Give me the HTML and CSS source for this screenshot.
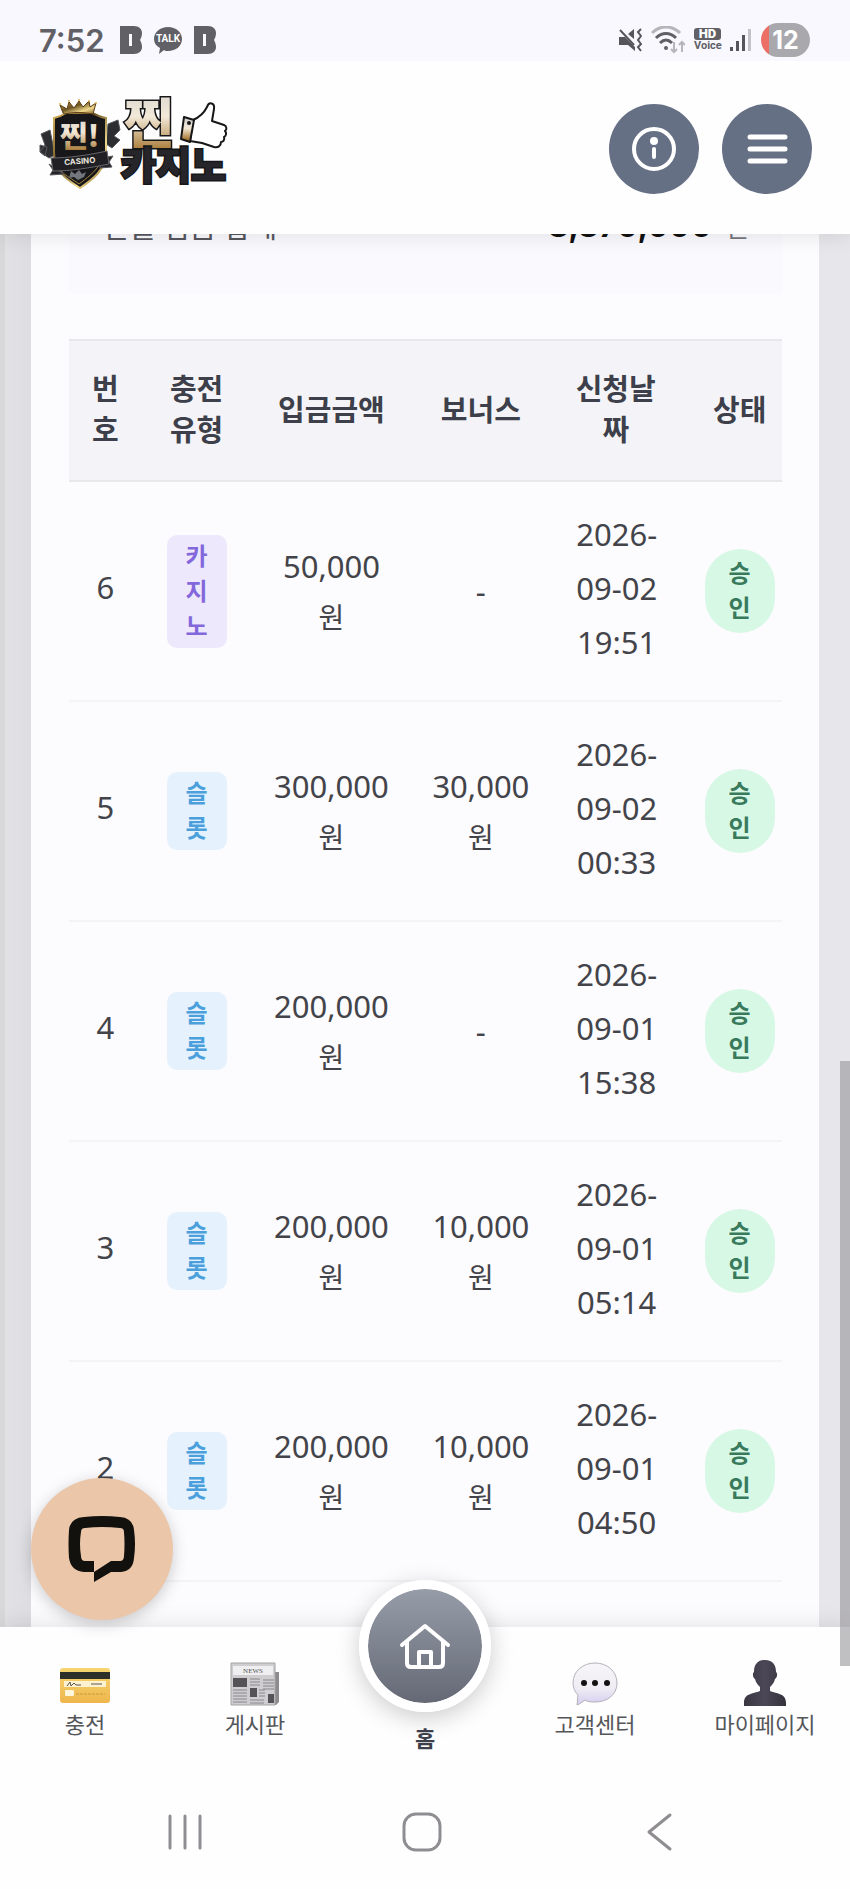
FILE: index.html
```html
<!DOCTYPE html>
<html lang="ko">
<head>
  <meta charset="UTF-8" />
  <meta name="viewport" content="width=device-width, initial-scale=1" />
  <title>찐카지노 - 충전내역</title>
  <link rel="stylesheet" href="styles.css">
</head>
<body>
  <div class="status-bar">
    <div class="status-left">
      <span class="clock">7:52</span>
      <svg class="b-icon" viewBox="0 0 22 28"><path fill="#606066" fill-rule="evenodd" d="M0 0h14c5 0 8 3 8 7 0 3-1 5-2 7 1 2 2 4 2 7 0 4-3 7-8 7H0zM9 8v12h3V8z"/></svg>
      <svg class="talk-icon" viewBox="0 0 30 28"><path fill="#606066" d="M15 1c8 0 14 5 14 12s-6 12-14 12c-2 0-3 0-4-1l-5 4 1-6C3 20 1 17 1 13 1 6 7 1 15 1z"/><text x="15" y="16" class="talk-text">TALK</text></svg>
      <svg class="b-icon" viewBox="0 0 22 28"><path fill="#606066" fill-rule="evenodd" d="M0 0h14c5 0 8 3 8 7 0 3-1 5-2 7 1 2 2 4 2 7 0 4-3 7-8 7H0zM9 8v12h3V8z"/></svg>
    </div>
    <div class="status-right">
      <svg width="24" height="24" viewBox="0 0 24 24" fill="none" stroke="#55555b" stroke-width="2"><path fill="#55555b" stroke="none" d="M1 9h6l10 10v4l-7-6H1zM10 6l6-5v10z"/><path d="M2 2l14 15M23 1l-3 3 3 4-3 4 3 4-3 3 3 4"/></svg>
      <svg width="34" height="28" viewBox="0 0 34 28" fill="none" stroke-width="3"><path stroke="#b5b5ba" d="M1 7c8-8 20-8 28 0"/><path stroke="#606066" d="M5 12c6-6 14-6 20 0M9 17c4-4 8-4 12 0"/><circle cx="15" cy="22" r="2" fill="#606066" stroke="none"/><path stroke="#b5b5ba" stroke-width="2" d="M23 16v10m-3-3l3 3 3-3M31 26V16m-3 3l3-3 3 3"/></svg>
      <span class="hd"><b>HD</b><span>Voice</span></span>
      <svg width="22" height="24" viewBox="0 0 22 24"><path fill="#55555b" d="M0 19h3v4H0zM6 13h3v10H6zM12 7h3v16h-3z"/><path fill="#c3c3c8" d="M18 1h3v22h-3z"/></svg>
      <span class="battery">12</span>
    </div>
  </div>

  <header class="header">
    <a href="#" class="logo" aria-label="찐카지노">
      <svg width="192" height="94" viewBox="0 0 192 94">
        <defs>
          <linearGradient id="gold" x1="0" y1="0" x2="0" y2="1"><stop offset="0" stop-color="#cfcdca"/><stop offset=".45" stop-color="#f3e9d8"/><stop offset=".9" stop-color="#a5762f"/></linearGradient>
          <linearGradient id="rim" x1="0" y1="0" x2="1" y2="1"><stop offset="0" stop-color="#d9b35c"/><stop offset=".4" stop-color="#6b5220"/><stop offset=".7" stop-color="#f0d98d"/><stop offset="1" stop-color="#7a5a1c"/></linearGradient>
        </defs>
        <g fill="#2b2d31" stroke="#55575c">
          <path d="M3 32l9-4 5 25-6 3-9-6 5-7zM2 43l7 2-2 9-5-4z"/>
          <path d="M70 22l10-4 2 10-6 6 6 4-8 8-6-4z"/>
        </g>
        <path fill="#17171a" stroke="url(#rim)" stroke-width="2" d="M16 16c5-1 9-3 12-5h26c4 2 8 4 14 5v34c0 18-14 28-26 36C29 78 16 69 16 50z"/>
        <path fill="none" stroke="#a0813e" d="M20 65c5 8 13 11 21 17 8-6 15-11 21-20"/>
        <path fill="url(#rim)" stroke="#5b3c13" d="M25 11L22 3l7 4 2-7 5 6 5-7 4 6 6-6 1 6 6-4-3 11c-10-2-20-2-28 0z"/>
        <g fill="#e2b552"><circle cx="22" cy="2" r="1"/><circle cx="31" cy="-1" r="1"/><circle cx="41" cy="-2" r="1"/><circle cx="51" cy="-1" r="1"/><circle cx="58" cy="1" r="1"/></g>
        <text x="22" y="45" class="badge-name">찐!</text>
        <path fill="#252529" stroke="#56565b" d="M11 62l4 6-3 5 14-1zM64 56l11-2-4 6 3 5-12 1z"/>
        <path fill="#202024" stroke="#66666b" d="M13 56c18 0 38-3 56-7l2 13c-20 4-38 7-56 7z"/>
        <text x="42" y="62" class="badge-casino" transform="rotate(-5 42 62)">CASINO</text>
        <path fill="#74767d" d="M33 69l4 3 4-4 3 4 4-2-2 5-6 3-4-3-5 1z"/>
        <text x="86" y="42" class="logo-top">찐</text>
        <g stroke="#17171a" stroke-width="2" stroke-linejoin="round">
          <path fill="#fff" d="M155 18c7-3 11-7 14-13 2-6 8-4 7 2l-2 12 12 4c3 1 3 5 1 6 2 2 1 5-1 6 1 3-1 5-3 5 0 4-3 6-7 5l-12-4-12-2z"/>
          <path fill="url(#gold)" d="M146 15l10 3-4 22-9-3z"/>
        </g>
        <circle cx="151" cy="21" r="2" fill="#17171a"/>
        <text x="83" y="77" class="logo-bottom">카지노</text>
      </svg>
    </a>
    <div class="header-buttons">
      <button type="button" class="round-btn" aria-label="안내">
        <svg width="44" height="44" viewBox="0 0 44 44" fill="none" stroke="#fff" stroke-width="4" stroke-linecap="round"><circle cx="22" cy="22" r="20"/><circle cx="22" cy="14" r="4" fill="#fff" stroke="none"/><path d="M22 22v8"/></svg>
      </button>
      <button type="button" class="round-btn" aria-label="메뉴">
        <svg width="44" height="44" viewBox="0 0 44 44" stroke="#fff" stroke-width="5" stroke-linecap="round"><path d="M5 10h35M5 22h35M5 34h35"/></svg>
      </button>
    </div>
  </header>

  <main class="content">
    <section class="card">
      <div class="summary">
        <span class="summary-label">전월 입금 합계</span>
        <span class="summary-value"><b>8,370,000</b>원</span>
      </div>
      <div class="table-wrap">
        <table class="history">
          <colgroup>
            <col class="col-no"><col class="col-type"><col class="col-amount"><col class="col-bonus"><col class="col-date"><col class="col-state">
          </colgroup>
          <thead>
            <tr><th>번호</th><th>충전유형</th><th>입금금액</th><th>보너스</th><th>신청날짜</th><th>상태</th></tr>
          </thead>
          <tbody>
            <tr>
              <td class="no">6</td>
              <td><span class="type casino">카지노</span></td>
              <td>50,000 <span class="won">원</span></td>
              <td>-</td>
              <td class="date">2026-09-02 19:51</td>
              <td><span class="state">승인</span></td>
            </tr>
            <tr>
              <td class="no">5</td>
              <td><span class="type slot">슬롯</span></td>
              <td>300,000 <span class="won">원</span></td>
              <td>30,000 <span class="won">원</span></td>
              <td class="date">2026-09-02 00:33</td>
              <td><span class="state">승인</span></td>
            </tr>
            <tr>
              <td class="no">4</td>
              <td><span class="type slot">슬롯</span></td>
              <td>200,000 <span class="won">원</span></td>
              <td>-</td>
              <td class="date">2026-09-01 15:38</td>
              <td><span class="state">승인</span></td>
            </tr>
            <tr>
              <td class="no">3</td>
              <td><span class="type slot">슬롯</span></td>
              <td>200,000 <span class="won">원</span></td>
              <td>10,000 <span class="won">원</span></td>
              <td class="date">2026-09-01 05:14</td>
              <td><span class="state">승인</span></td>
            </tr>
            <tr>
              <td class="no">2</td>
              <td><span class="type slot">슬롯</span></td>
              <td>200,000 <span class="won">원</span></td>
              <td>10,000 <span class="won">원</span></td>
              <td class="date">2026-09-01 04:50</td>
              <td><span class="state">승인</span></td>
            </tr>
          </tbody>
        </table>
      </div>
    </section>
  </main>

  <nav class="tab-bar">
    <a href="#" class="tab">
      <svg width="50" height="44" viewBox="0 0 50 44">
        <defs><linearGradient id="cardbg" x1="0" y1="0" x2="0" y2="1"><stop offset="0" stop-color="#f6d671"/><stop offset="1" stop-color="#efb64d"/></linearGradient></defs>
        <rect x="0" y="6" width="50" height="35" rx="3" fill="url(#cardbg)"/>
        <path fill="#2c3029" d="M0 10h50v7H0z"/>
        <path fill="#fdf2d0" d="M4 19h42v6H4z"/>
        <path fill="none" stroke="#555" d="M7 24l3-4 1 4 3-3 2 2h5M31 22h11"/>
        <rect x="5" y="28" width="9" height="6" rx="1" fill="#fff7dc"/>
        <path stroke="#c99a3c" stroke-dasharray="3 1" d="M16 32h29"/>
      </svg>
      <span>충전</span>
    </a>
    <a href="#" class="tab">
      <svg width="50" height="44" viewBox="0 0 50 44">
        <path fill="#8d8b8e" d="M42 10h7v30l-3 3h-6z"/>
        <path fill="#cfcdd0" stroke="#a5a3a6" d="M1 1h44v42H1z"/>
        <path fill="#efeef0" d="M3 4h40v9H3z"/>
        <text x="23" y="11" class="news-text">NEWS</text>
        <path fill="#555357" d="M3 16h14v9H3zM20 26h7v9h-7zM38 32h6v9h-6z"/>
        <path stroke="#88868a" d="M20 17h10M20 20h10M20 23h10M33 18h11M33 21h11M33 24h11M33 27h11M3 28h14M3 31h14M3 34h14M3 37h14M3 40h14M20 38h14M20 41h14M29 28h6M29 31h6M29 34h6"/>
      </svg>
      <span>게시판</span>
    </a>
    <a href="#" class="tab home">
      <span class="home-circle">
        <svg width="52" height="48" viewBox="0 0 52 48" fill="none" stroke="#fff" stroke-width="4" stroke-linecap="round" stroke-linejoin="round"><path d="M3 23L26 4l23 19M8 20v21q0 4 4 4h28q4 0 4-4V20"/><path d="M20 44V30h12v14"/></svg>
      </span>
      <span>홈</span>
    </a>
    <a href="#" class="tab">
      <svg width="50" height="44" viewBox="0 0 50 44">
        <defs><linearGradient id="bubble" x1="0" y1="0" x2="0" y2="1"><stop offset="0" stop-color="#f7f6f8"/><stop offset=".6" stop-color="#efecf4"/><stop offset="1" stop-color="#d5cdf0"/></linearGradient></defs>
        <path fill="url(#bubble)" stroke="#b5b1ba" d="M25 1c12 0 22 8 22 20s-10 19-22 19c-4 0-7 0-10-2-3 2-5 4-8 5l1-10C5 30 3 26 3 21 3 9 13 1 25 1z"/>
        <g fill="#111"><circle cx="14" cy="21" r="3"/><circle cx="25" cy="21" r="3"/><circle cx="37" cy="21" r="3"/></g>
      </svg>
      <span>고객센터</span>
    </a>
    <a href="#" class="tab">
      <svg width="50" height="46" viewBox="0 0 50 46">
        <defs><linearGradient id="person" x1="0" y1="0" x2="1" y2="0"><stop offset="0" stop-color="#3a3742"/><stop offset=".5" stop-color="#4b4757"/><stop offset="1" stop-color="#35323c"/></linearGradient></defs>
        <path fill="url(#person)" d="M25 0c8 0 11 5 11 12 2 1 1 6-1 7-1 4-3 6-5 8v4c7 3 16 2 16 12v3H4v-3c0-10 9-9 16-12v-4c-2-2-4-4-5-8-2-1-3-6-1-7C14 5 17 0 25 0z"/>
      </svg>
      <span>마이페이지</span>
    </a>
  </nav>

  <div class="system-nav">
    <button type="button" aria-label="최근 앱"><svg width="40" height="40" viewBox="0 0 40 40" fill="none" stroke="#8f8d91" stroke-width="3" stroke-linecap="round"><path d="M5 4v32M20 4v32M35 4v32"/></svg></button>
    <button type="button" aria-label="홈 화면"><svg width="40" height="40" viewBox="0 0 40 40" fill="none" stroke="#8f8d91" stroke-width="3"><rect x="2" y="2" width="36" height="36" rx="12"/></svg></button>
    <button type="button" aria-label="뒤로"><svg width="40" height="40" viewBox="0 0 40 40" fill="none" stroke="#8f8d91" stroke-width="3" stroke-linecap="round" stroke-linejoin="round"><path d="M31 3L10 20l21 17"/></svg></button>
  </div>

  <button type="button" class="chat-btn" aria-label="채팅 상담">
    <svg width="68" height="68" viewBox="0 0 68 68"><path fill="#12110e" fill-rule="evenodd" d="M16 2q18-2 36 0 13 1 14 13 2 14 0 28-1 13-13 14H43L26 67V57H16Q3 56 1 43q-1-14 0-28Q2 3 16 2zM17 13q-4 0-4 4-2 12 0 24 0 5 4 5h9v11l17-11h9q4 0 4-5 1-12 0-24 0-4-4-4-18-2-35 0z"/></svg>
  </button>
  <div class="scroll-thumb"></div>
</body>
</html>
```
FILE: styles.css
```css
* {
  box-sizing: border-box;
}

body {
  display: flex;
  flex-direction: column;
  height: 100vh;
  margin: 0;
  overflow: hidden;
  position: relative;
  background: #fefefe;
  color: #43444a;
  font-family: "Noto Sans", "Noto Sans CJK KR", sans-serif;
}

button {
  padding: 0;
  border: 0;
  background: none;
  cursor: pointer;
}

a {
  color: inherit;
  text-decoration: none;
}

svg {
  display: block;
}

/* phone status bar */
.status-bar {
  display: flex;
  flex: none;
  justify-content: space-between;
  height: 61px;
  padding: 20px 40px 0 39px;
  background: #f8f8fe;
  color: #606066;
  z-index: 3;
}

.status-left,
.status-right {
  display: flex;
  align-items: center;
  height: 40px;
}

.status-left {
  gap: 11px;
}

.status-right {
  gap: 9px;
}

.clock {
  width: 70px;
  font-family: Inter, sans-serif;
  font-size: 31px;
  font-weight: 600;
}

.b-icon {
  width: 22px;
  height: 28px;
}

.talk-icon {
  width: 30px;
  height: 28px;
}

.talk-text {
  fill: #fff;
  font-family: Roboto, sans-serif;
  font-size: 10px;
  font-weight: 700;
  text-anchor: middle;
}

.hd {
  display: flex;
  flex-direction: column;
  width: 27px;
  font-family: Roboto, sans-serif;
  font-size: 11px;
  font-weight: 700;
  line-height: 12px;
  text-align: center;
}

.hd b {
  border-radius: 3px;
  background: #606066;
  color: #fff;
  font-size: 13px;
}

.battery {
  width: 49px;
  height: 34px;
  border-radius: 17px;
  background: linear-gradient(90deg, #ec6f66 8px, #a9a8ad 8px);
  color: #fff;
  font-family: Inter, sans-serif;
  font-size: 25px;
  font-weight: 700;
  line-height: 34px;
  text-align: center;
}

/* site header */
.header {
  display: flex;
  flex: none;
  align-items: center;
  justify-content: space-between;
  height: 173px;
  padding: 3px 38px 0;
  background: #fefefe;
  box-shadow: 0 2px 20px rgba(0, 0, 0, 0.1);
  z-index: 2;
}

.logo svg {
  overflow: visible;
}

.badge-name,
.logo-top,
.logo-bottom {
  font-family: "Noto Sans CJK KR", sans-serif;
  font-weight: 900;
  paint-order: stroke;
  stroke: #17171a;
  stroke-width: 3px;
}

.badge-name {
  fill: url(#gold);
  font-size: 30px;
}

.badge-casino {
  fill: #e8e4dc;
  font-family: Inter, sans-serif;
  font-size: 8px;
  font-weight: 700;
  text-anchor: middle;
}

.logo-top {
  fill: url(#gold);
  font-size: 54px;
}

.logo-bottom {
  fill: #26262a;
  font-size: 38px;
}

.header-buttons {
  display: flex;
  gap: 23px;
}

.round-btn {
  display: flex;
  align-items: center;
  justify-content: center;
  width: 90px;
  height: 90px;
  border-radius: 50%;
  background: #667085;
}

/* history list, scrolled to its end */
.content {
  display: flex;
  flex: 1;
  flex-direction: column;
  justify-content: flex-end;
  min-height: 0;
  overflow: hidden;
  padding: 0 31px;
  background: linear-gradient(90deg, #d8d7da 5px, #e2e1e4 5px, #dedde1 30px, #e7e6ea 50%);
}

.card {
  padding: 0 37px 45px 38px;
  background: #fcfbfe;
}

.summary {
  display: flex;
  align-items: center;
  justify-content: space-between;
  height: 134px;
  margin-bottom: 46px;
  padding: 0 33px 2px;
  background: #f9f9fe;
  font-size: 29px;
}

.summary-label {
  color: #55565c;
}

.summary-value {
  color: #77787e;
  font-size: 25px;
}

.summary-value b {
  margin-right: 14px;
  color: #111;
  font-family: Inter, sans-serif;
  font-size: 32px;
}

.table-wrap {
  overflow: hidden;
}

.history {
  width: calc(100% + 16px);
  table-layout: fixed;
  border-collapse: collapse;
  text-align: center;
}

.col-no { width: 10%; }
.col-type { width: 15%; }
.col-amount { width: 22%; }
.col-bonus { width: 19%; }
.col-date { width: 18%; }
.col-state { width: 16%; }

.history th {
  height: 141px;
  padding: 0 20px 3px;
  border-top: 2px solid #e8e8eb;
  border-bottom: 2px solid #e8e8eb;
  background: #f4f4f8;
  color: #3d3f4a;
  font-size: 29px;
  font-weight: 700;
  line-height: 41px;
  word-break: break-all;
}

.history td {
  height: 220px;
  padding: 0 20px;
  border-bottom: 2px solid #f4f3f6;
  font-size: 31px;
  line-height: 50px;
}

.history .no {
  padding-bottom: 8px;
}

.history .date {
  padding: 0 20px 6px 22px;
  line-height: 54px;
}

.won {
  font-size: 28px;
}

.type,
.state {
  display: inline-block;
  font-size: 24px;
  font-weight: 700;
  line-height: 35px;
  vertical-align: middle;
  word-break: break-all;
}

.type {
  width: 60px;
  padding: 3px 18px 5px;
  border-radius: 10px;
}

.casino {
  background: #eee8fc;
  color: #8268db;
}

.slot {
  background: #e5f2fe;
  color: #4ba0dc;
}

.state {
  width: 70px;
  padding: 6px 23px 8px;
  border-radius: 35px;
  background: #d8f8e6;
  color: #397a5d;
}

/* bottom tabs */
.tab-bar {
  display: grid;
  flex: none;
  grid-template-columns: repeat(5, 1fr);
  grid-template-rows: 100%;
  height: 148px;
  background: #fefefe;
  box-shadow: 0 -2px 20px rgba(0, 0, 0, 0.1);
  z-index: 2;
}

.tab {
  display: flex;
  flex-direction: column;
  align-items: center;
  justify-content: flex-end;
  gap: 2px;
  padding-bottom: 35px;
  color: #55565a;
  font-size: 22px;
  line-height: 32px;
  white-space: nowrap;
}

.home {
  gap: 10px;
  padding-bottom: 21px;
  color: #3d3f4a;
  font-weight: 700;
}

.home-circle {
  display: flex;
  align-items: center;
  justify-content: center;
  flex: none;
  width: 132px;
  height: 132px;
  border: 9px solid #fff;
  border-radius: 50%;
  background: linear-gradient(#969ca8, #656976) padding-box;
  box-shadow: 0 6px 24px rgba(0, 0, 0, 0.2);
}

.news-text {
  fill: #555;
  font-family: "Liberation Serif", serif;
  font-size: 7px;
  text-anchor: middle;
}

/* phone navigation keys */
.system-nav {
  display: flex;
  flex: none;
  align-items: center;
  justify-content: space-around;
  height: 114px;
  padding: 0 73px 0 66px;
  background: #fefefe;
  z-index: 3;
}

.chat-btn {
  display: flex;
  align-items: center;
  justify-content: center;
  position: absolute;
  bottom: 269px;
  left: 31px;
  width: 142px;
  height: 142px;
  border-radius: 50%;
  background: #ebc6a8;
  box-shadow: 0 4px 16px rgba(0, 0, 0, 0.2);
  z-index: 3;
}

.scroll-thumb {
  position: absolute;
  right: 0;
  bottom: 223px;
  width: 10px;
  height: 605px;
  background: rgba(150, 148, 153, 0.6);
  z-index: 4;
}
```
